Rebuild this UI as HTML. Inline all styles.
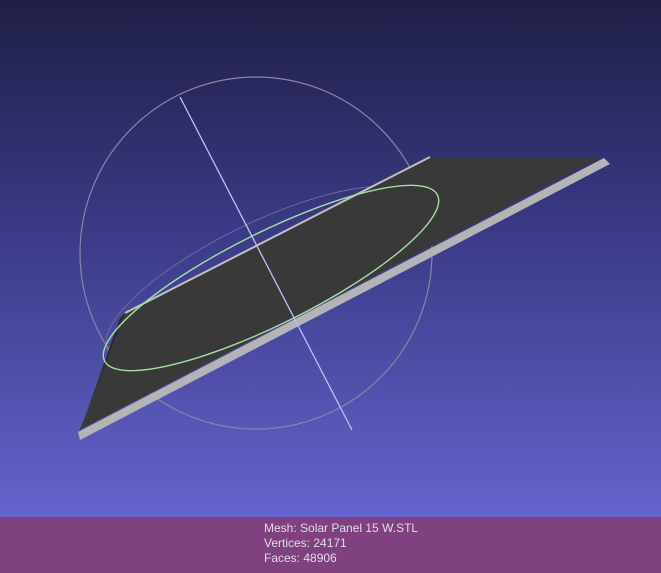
<!DOCTYPE html>
<html><head><style>
html,body{margin:0;padding:0;width:661px;height:573px;overflow:hidden}
body{background:linear-gradient(#1f1f46 0%,#3a3a86 40%,#6c6cda 100%);position:relative;font-family:"Liberation Sans",sans-serif}
svg{position:absolute;left:0;top:0}
.bar{position:absolute;left:0;top:517px;width:661px;height:56px;background:#7f417f}
.t{position:absolute;left:264px;color:#e0dce8;font-size:12px;line-height:15px}
</style></head><body>
<svg width="661" height="517" viewBox="0 0 661 517">
<circle cx="256" cy="253" r="176" fill="none" stroke="#8a84a8" stroke-width="1.2"/>
<ellipse cx="262" cy="275" rx="172" ry="52" transform="rotate(-26 262 275)" fill="none" stroke="#6e6c90" stroke-width="1"/>
<polygon points="125,313 430,157 600,158 80,430" fill="#393939"/>
<polygon points="125,313 80,430 78,437 120,318" fill="#2a2a2a"/>
<polygon points="78,432 604,158 610,164 80,440" fill="#b4b4b4"/>
<line x1="125" y1="313" x2="430" y2="157" stroke="#c0c0c0" stroke-width="2"/>
<ellipse cx="271" cy="278" rx="186" ry="46" transform="rotate(-26.5 271 278)" fill="none" stroke="#a0e0a0" stroke-width="1.4"/>
<line x1="180" y1="97" x2="352" y2="430" stroke="#c0c0f8" stroke-width="1.3"/>
</svg>
<div class="bar"></div>
<div class="t" style="top:521px">Mesh: Solar Panel 15 W.STL</div>
<div class="t" style="top:536px">Vertices: 24171</div>
<div class="t" style="top:551px">Faces: 48906</div>
</body></html>
